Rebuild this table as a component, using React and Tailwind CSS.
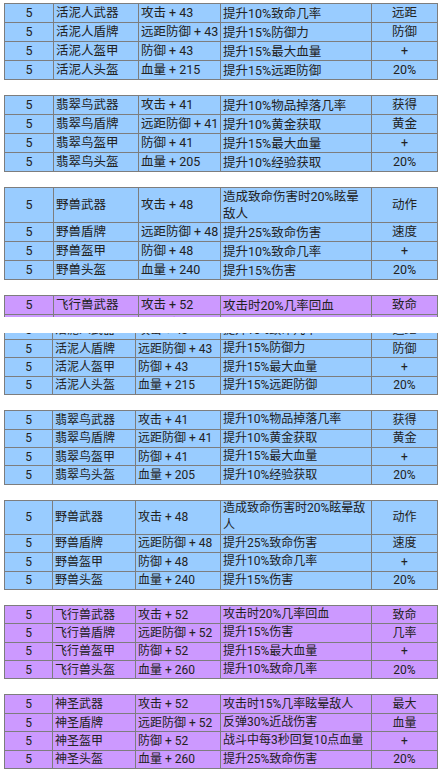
const BLUE = 'bg-[#99ccff]'
const PURPLE = 'bg-[#cc99ff]'

const groups = [
  {
    name: '活泥人', color: BLUE, stat: 43, hp: 215,
    fx: ['提升10%致命几率', '提升15%防御力', '提升15%最大血量', '提升15%远距防御'],
    tag: ['远距', '防御', '+', '20%'],
  },
  {
    name: '翡翠鸟', color: BLUE, stat: 41, hp: 205,
    fx: ['提升10%物品掉落几率', '提升10%黄金获取', '提升15%最大血量', '提升10%经验获取'],
    tag: ['获得', '黄金', '+', '20%'],
  },
  {
    name: '野兽', color: BLUE, stat: 48, hp: 240, tall: true,
    fx: ['造成致命伤害时20%眩晕敌人', '提升25%致命伤害', '提升10%致命几率', '提升15%伤害'],
    tag: ['动作', '速度', '+', '20%'],
  },
  {
    name: '飞行兽', color: PURPLE, stat: 52, hp: 260,
    fx: ['攻击时20%几率回血', '提升15%伤害', '提升15%最大血量', '提升10%致命几率'],
    tag: ['致命', '几率', '+', '20%'],
  },
  {
    name: '神圣', color: PURPLE, stat: 52, hp: 260,
    fx: ['攻击时15%几率眩晕敌人', '反弹30%近战伤害', '战斗中每3秒回复10点血量', '提升25%致命伤害'],
    tag: ['最大', '血量', '+', '20%'],
  },
]

const parts = ['武器', '盾牌', '盔甲', '头盔']

function rowsOf(g) {
  return parts.map((p, i) => ({
    item: g.name + p,
    base: i === 0 ? `攻击 + ${g.stat}` : i === 1 ? `远距防御 + ${g.stat}` : i === 2 ? `防御 + ${g.stat}` : `血量 + ${g.hp}`,
    fx: g.fx[i],
    tag: g.tag[i],
  }))
}

function Table({ g, top }) {
  const w = top
    ? ['w-[49px]', 'w-[85px]', 'w-[82px]', 'w-[151px]', 'w-[66px]']
    : ['w-[48px]', 'w-[83px]', 'w-[85px]', 'w-[151px]', 'w-[66px]']
  const rowH = top ? 'h-[19px]' : 'h-[18.4px]'
  const tallH = top ? 'h-[35px]' : 'h-[34px]'
  const cell = 'flex items-center shrink-0 border-r border-[#7d7d7d] px-[2px]'
  return (
    <div className={`ml-[4px] w-[434px] border-t border-l border-[#7d7d7d] ${g.color}`}>
      {rowsOf(g).map((r, i) => (
        <div key={i} className={`flex border-b border-[#7d7d7d] ${g.tall && i === 0 ? tallH : rowH}`}>
          <div className={`${cell} ${w[0]} justify-center`}>5</div>
          <div className={`${cell} ${w[1]}`}>{r.item}</div>
          <div className={`${cell} ${w[2]} whitespace-nowrap`}>{r.base}</div>
          <div className={`${cell} ${w[3]} leading-[17px]`}>
            {g.tall && i === 0 ? (
              top ? (
                <span>造成致命伤害时20%眩晕<br />敌人</span>
              ) : (
                <span>造成致命伤害时20%眩晕敌<br />人</span>
              )
            ) : (
              r.fx
            )}
          </div>
          <div className={`${cell} ${w[4]} justify-center`}>{r.tag}</div>
        </div>
      ))}
    </div>
  )
}

export default function App() {
  return (
    <div
      className="w-[439px] h-[771px] bg-white text-[#222] overflow-hidden"
      style={{ fontFamily: 'Roboto, "Noto Sans CJK SC", sans-serif' }}
    >
      {/* first capture */}
      <div className="h-[317px] overflow-hidden text-[12.5px]">
        <div className="pt-[3px] flex flex-col gap-[15px]">
          <Table g={groups[0]} top />
          <Table g={groups[1]} top />
          <Table g={groups[2]} top />
          <Table g={groups[3]} top />
        </div>
      </div>

      <div className="h-[16px]" />

      {/* second capture */}
      <div className="h-[438px] overflow-hidden text-[12px]">
        <div className="-mt-[12.4px] flex flex-col gap-[15px]">
          {groups.map((g) => (
            <Table key={g.name} g={g} />
          ))}
        </div>
      </div>
    </div>
  )
}
